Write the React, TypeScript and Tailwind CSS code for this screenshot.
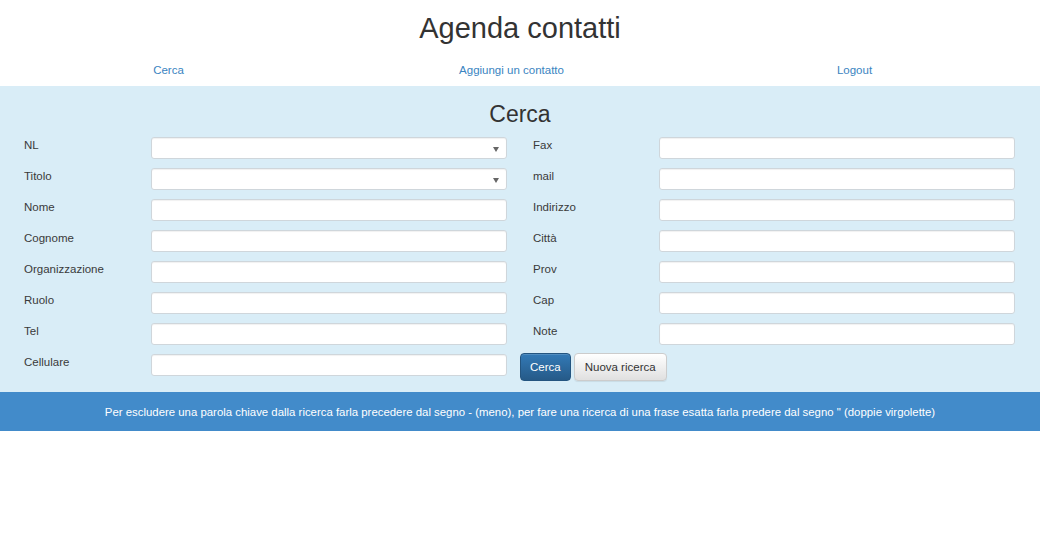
import React from "react";

const leftFields = [
  { label: "NL", select: true },
  { label: "Titolo", select: true },
  { label: "Nome" },
  { label: "Cognome" },
  { label: "Organizzazione" },
  { label: "Ruolo" },
  { label: "Tel" },
  { label: "Cellulare" },
];

const rightFields = ["Fax", "mail", "Indirizzo", "Città", "Prov", "Cap", "Note"];

function Field({ select }: { select?: boolean }) {
  return (
    <div className="relative w-[356px] h-[22px] bg-white border border-[#cfd6db] rounded-[3px] shadow-[inset_0_1px_1px_rgba(0,0,0,0.06)]">
      {select && (
        <svg
          className="absolute right-[7px] top-[9px]"
          width="6"
          height="5"
          viewBox="0 0 6 5"
        >
          <path d="M0 0 L6 0 L3 5 Z" fill="#666" />
        </svg>
      )}
    </div>
  );
}

export default function App() {
  return (
    <div
      className="w-[1040px] min-h-[550px] bg-white text-[#333]"
      style={{ fontFamily: '"Liberation Sans", Arial, sans-serif' }}
    >
      <div className="pt-[13px]">
        <h1 className="text-center text-[29px] leading-[31px] text-[#333] font-normal">
          Agenda contatti
        </h1>
      </div>
      <div className="flex ml-[-3px] mt-[18px] h-[16px] text-[11.5px] leading-[16px] text-[#3a84c1]">
        <div className="w-[343px] text-center">Cerca</div>
        <div className="w-[343px] text-center">Aggiungi un contatto</div>
        <div className="w-[343px] text-center">Logout</div>
      </div>
      <div className="mt-[8px] bg-[#d9edf7] pt-[16px] pb-[11px]">
        <h3 className="text-center text-[23px] leading-[24px] text-[#333] font-normal">
          Cerca
        </h3>
        <div className="flex mt-[11px] pl-[24px] text-[11.5px] leading-[16px] text-[#3a3a3a]">
          <div className="flex flex-col gap-[9px]">
            {leftFields.map((f) => (
              <div key={f.label} className="flex h-[22px]">
                <div className="w-[127px]">{f.label}</div>
                <Field select={f.select} />
              </div>
            ))}
          </div>
          <div className="flex flex-col ml-[26px]">
            <div className="flex flex-col gap-[9px]">
              {rightFields.map((l) => (
                <div key={l} className="flex h-[22px]">
                  <div className="w-[126px]">{l}</div>
                  <Field />
                </div>
              ))}
            </div>
            <div className="flex gap-[3px] ml-[-13px] mt-[8px] h-[28px]">
              <button className="h-[28px] px-[9px] rounded-[4px] border border-[#245580] text-white bg-gradient-to-b from-[#337ab7] to-[#265a88] shadow-[inset_0_1px_0_rgba(255,255,255,0.15)]">
                Cerca
              </button>
              <button className="h-[28px] px-[10px] rounded-[4px] border border-[#ccc] text-[#333] bg-gradient-to-b from-white to-[#e0e0e0] shadow-[0_1px_1px_rgba(0,0,0,0.075)]">
                Nuova ricerca
              </button>
            </div>
          </div>
        </div>
      </div>
      <div className="h-[39px] bg-[#428bca] flex items-center justify-center text-white text-[11.4px] leading-[16px]">
        Per escludere una parola chiave dalla ricerca farla precedere dal segno - (meno), per fare una ricerca di una frase esatta farla predere dal segno " (doppie virgolette)
      </div>
    </div>
  );
}
